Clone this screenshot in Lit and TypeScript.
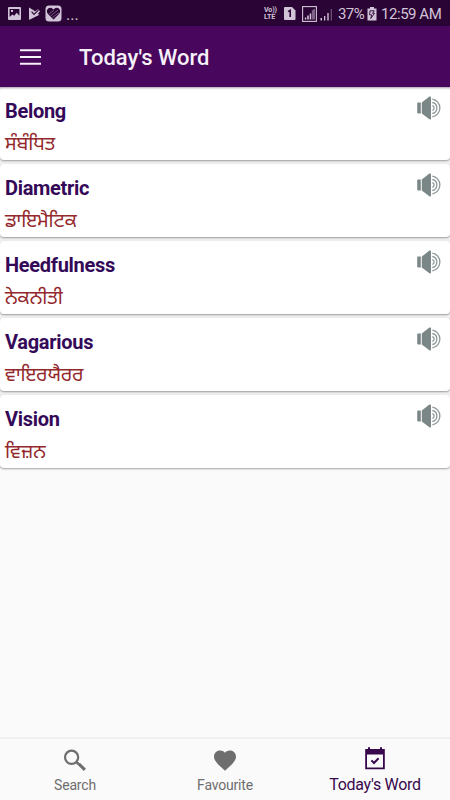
import { LitElement, html, css, svg } from "lit";
import { customElement, property } from "lit/decorators.js";

interface Entry {
  word: string;
  meaning: string;
}

const ENTRIES: Entry[] = [
  { word: "Belong", meaning: "ਸੰਬੰਧਿਤ" },
  { word: "Diametric", meaning: "ਡਾਇਮੈਟਿਕ" },
  { word: "Heedfulness", meaning: "ਨੇਕਨੀਤੀ" },
  { word: "Vagarious", meaning: "ਵਾਇਰਯੈਰਰ" },
  { word: "Vision", meaning: "ਵਿਜ਼ਨ" },
];

@customElement("status-bar")
class StatusBar extends LitElement {
  static styles = css`
    :host {
      display: flex;
      align-items: center;
      height: 26px;
      background: #2a0434;
      color: #d2c4d8;
      font-family: Roboto, sans-serif;
      padding: 1px 9px 0 8px;
      box-sizing: border-box;
      white-space: nowrap;
    }
    svg { display: block; flex: none; fill: currentColor; }
    .play { margin-left: 7px; }
    .heart { margin-left: 5px; }
    .dots { margin-left: 4px; font-size: 16px; line-height: 20px; padding-top: 3px; }
    .space { flex: 1; }
    .volte {
      font: 700 7px/7px Roboto, sans-serif;
      width: 13px;
      margin-right: 7px;
      letter-spacing: -0.1px;
    }
    .sim { margin-right: 6px; }
    .boxed { margin-right: 3px; }
    .bars { margin-right: 5px; }
    .pct { font-size: 15px; line-height: 20px; width: 26px; letter-spacing: -0.6px; margin-right: 3px; }
    .battery { margin-right: 4px; }
    .time { font-size: 15px; line-height: 20px; width: 60px; letter-spacing: -0.45px; }
  `;

  render() {
    return html`
      <svg width="13" height="13" viewBox="0 0 13 13">
        <path fill-rule="evenodd" d="M1 0H12Q13 0 13 1V12Q13 13 12 13H1Q0 13 0 12V1Q0 0 1 0ZM1.6 2V10L4.4 7.4L6.2 8.8L8.7 5.7L11.4 8.8V2ZM3 3H5V5H3Z" />
      </svg>
      <svg class="play" width="12" height="13" viewBox="0 0 12 13">
        <path d="M1 0.5L6 3.5L7 4.5L10 2.2L12 4.2L9.8 7L11.5 7.8L2 12.6Q1 13 1 12Z" />
        <path d="M3.6 4.6L6 7.4L10.4 3.2" fill="none" stroke="#2a0434" stroke-width="1.1" />
      </svg>
      <svg class="heart" width="17" height="17" viewBox="0 0 17 17">
        <rect x="0.5" y="0.5" width="16" height="16" rx="3.5" />
        <path fill="#2a0434" d="M8.5 14.5L3 9Q0.5 5.5 3.5 3.2Q6.3 1.7 8.5 4.6Q10.7 1.7 13.5 3.2Q16.5 5.5 14 9Z" />
        <path d="M4 9L9 5.2M5.5 11L13 5M7.3 12.8L14 7.6" stroke="#a895ae" stroke-width="0.6" />
      </svg>
      <span class="dots">...</span>
      <span class="space"></span>
      <div class="volte">Vo))<br />LTE</div>
      <svg class="sim" width="12" height="13" viewBox="0 0 12 13">
        <path d="M1 0H8L11.5 3.5V12Q11.5 13 10.5 13H1Q0 13 0 12V1Q0 0 1 0Z" />
        <path d="M4 4.6L6.2 3.4V10" fill="none" stroke="#2a0434" stroke-width="1.6" />
      </svg>
      <svg class="boxed" width="15" height="16" viewBox="0 0 15 16">
        <rect x="0.6" y="0.6" width="13.8" height="14.8" fill="none" stroke="currentColor" stroke-width="1.1" />
        <path d="M2.8 11.5H4.3V13.5H2.8ZM5.2 9.5H6.8V13.5H5.2Z" />
        <path d="M7.7 7.5H9.2V13.5H7.7Z" />
        <path opacity="0.5" d="M9.8 4.5L13 2.5V13.5H9.8Z" />
      </svg>
      <svg class="bars" width="13" height="14" viewBox="0 0 13 14">
        <path d="M0.5 11H2V13.5H0.5ZM4 9H5.3V13.5H4ZM7.3 6H8.7V13.5H7.3Z" />
        <path opacity="0.4" d="M10.7 2H12V13.5H10.7Z" />
      </svg>
      <span class="pct">37%</span>
      <svg class="battery" width="10" height="14" viewBox="0 0 10 14">
        <path d="M3 0H7V1.5H9.5V13.5H0.5V1.5H3Z" />
        <path d="M3 3.8H7.3L5.5 6.3H7.5L3.8 11.5L4.6 7.8H2.6Z" fill="none" stroke="#2a0434" stroke-width="0.9" />
      </svg>
      <span class="time">12:59 AM</span>
    `;
  }
}

@customElement("word-card")
class WordCard extends LitElement {
  static styles = css`
    :host {
      display: flex;
      justify-content: space-between;
      height: 73px;
      box-sizing: border-box;
      padding: 9px 8px 0 5px;
      background: #fff;
      border-radius: 4px;
      box-shadow: 0 1px 2px rgba(0, 0, 0, 0.36);
    }
    .word {
      font: 700 20px/30px Roboto, sans-serif;
      letter-spacing: -0.3px;
      color: #340a58;
    }
    .meaning {
      font: 400 19.4px/30px "Noto Sans Gurmukhi", "Noto Sans", sans-serif;
      color: #93282c;
      margin-top: 5px;
      white-space: nowrap;
    }
    svg { display: block; }
  `;

  @property({ attribute: false }) entry!: Entry;

  render() {
    return html`
      <div>
        <div class="word">${this.entry.word}</div>
        <div class="meaning">${this.entry.meaning}</div>
      </div>
      <svg width="25" height="24" viewBox="0 0 25 24">
        <path fill="#7b8787" d="M1 6.6H3.8V17.4H1Q0.2 17.4 0.2 16.6V7.4Q0.2 6.6 1 6.6ZM4.8 6.6L12.4 0.6Q14 0 14 1.4V22.6Q14 24 12.4 23.2L4.8 17.4Z" />
        <g fill="none" stroke="#8e9898" stroke-width="1.3">
          <path d="M15.3 9.6A2.5 2.5 0 0 1 15.3 14.4" />
          <path d="M15.3 6.5A5.6 5.6 0 0 1 15.3 17.5" />
          <path d="M15.3 3.2A8.9 8.9 0 0 1 15.3 20.8" />
        </g>
      </svg>
    `;
  }
}

@customElement("app-root")
class AppRoot extends LitElement {
  static styles = css`
    :host {
      display: flex;
      flex-direction: column;
      width: 450px;
      height: 800px;
      background: #fafafa;
      font-family: Roboto, sans-serif;
      overflow: hidden;
    }
    header {
      display: flex;
      align-items: center;
      height: 61px;
      box-sizing: border-box;
      padding: 1px 0 0 20px;
      background: #48065c;
      color: #f6f0f8;
      box-shadow: 0 1px 2px rgba(40, 0, 50, 0.4);
      z-index: 1;
    }
    header svg { margin-right: 38px; }
    h1 { margin: 2px 0 0; font: 500 22px/30px Roboto, sans-serif; }
    main { flex: 1; }
    .list {
      display: flex;
      flex-direction: column;
      gap: 4px;
      background: #f1f1f1;
    }
    nav {
      display: grid;
      grid-template-columns: repeat(3, 1fr);
      height: 63px;
      box-sizing: border-box;
      border-top: 2px solid #f0f0f0;
      color: #6e6e6e;
    }
    .tab {
      display: flex;
      flex-direction: column;
      align-items: center;
      padding-top: 7px;
      font-size: 14px;
      letter-spacing: -0.2px;
      line-height: 18px;
    }
    .tab svg { display: block; fill: currentColor; }
    .tab.active { color: #38084c; font-size: 16px; letter-spacing: -0.3px; }
  `;

  render() {
    const tabs = [
      { label: "Search", d: svg`<circle cx="11.6" cy="11.3" r="6.6" fill="none" stroke="currentColor" stroke-width="2.2" /><path d="M16.2 18.2L18.3 16.1L19.3 17H20.1L26 22.7L23.8 24.9L17.8 19V18.2Z" /><path d="M16.2 16L18.2 18" stroke="currentColor" stroke-width="2.2" />` },
      { label: "Favourite", d: svg`<g transform="translate(1.8 1.2) scale(1.1)"><path d="M12 21.35l-1.45-1.32C5.4 15.36 2 12.28 2 8.5 2 5.42 4.42 3 7.5 3c1.74 0 3.41.81 4.5 2.09C13.09 3.81 14.76 3 16.5 3 19.58 3 22 5.42 22 8.5c0 3.78-3.4 6.86-8.55 11.54L12 21.35z" /></g>` },
      { label: "Today's Word", d: svg`<path fill-rule="evenodd" d="M5.2 3H8V1.3H10V3H20V1.3H22V3H24.8V23.3H5.2ZM7 8.5V21.5H23V8.5Z" /><path d="M11.4 14.4L14 17L18.6 12.2" fill="none" stroke="currentColor" stroke-width="2" />` },
    ];
    return html`
      <status-bar></status-bar>
      <header>
        <svg width="21" height="16" viewBox="0 0 21 16">
          <path d="M0 1.2H21M0 8H21M0 14.8H21" stroke="currentColor" stroke-width="2" />
        </svg>
        <h1>Today's Word</h1>
      </header>
      <main>
        <div class="list">${ENTRIES.map((e) => html`<word-card .entry=${e}></word-card>`)}</div>
      </main>
      <nav>
        ${tabs.map(
          (t, i) => html`<div class="tab ${i === 2 ? "active" : ""}">
            <svg width="30" height="30" viewBox="0 0 30 30">${t.d}</svg>
            <span>${t.label}</span>
          </div>`
        )}
      </nav>
    `;
  }
}
